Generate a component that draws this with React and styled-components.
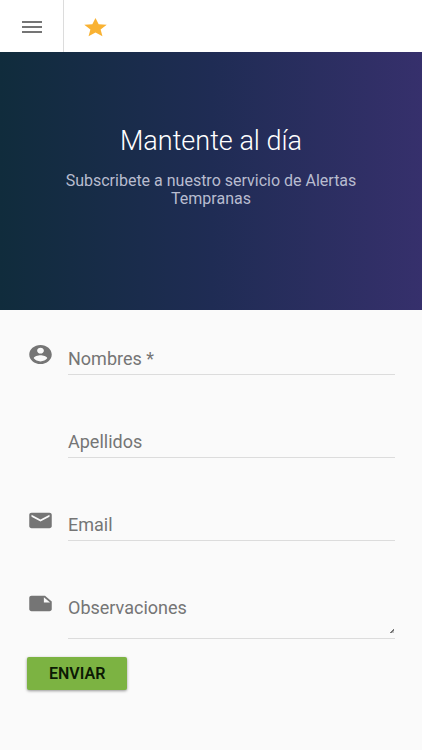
import React, { useState } from 'react';
import styled, { createGlobalStyle } from 'styled-components';

const ICONS = {
  star: 'M12 17.27L18.18 21l-1.64-7.03L22 9.24l-7.19-.61L12 2 9.19 8.63 2 9.24l5.46 4.73L5.82 21z',
  account:
    'M12 2C6.48 2 2 6.48 2 12s4.48 10 10 10 10-4.48 10-10S17.52 2 12 2zm0 3c1.66 0 3 1.34 3 3s-1.34 3-3 3-3-1.34-3-3 1.34-3 3-3zm0 14.2c-2.5 0-4.71-1.28-6-3.22.03-1.99 4-3.08 6-3.08 1.99 0 5.97 1.09 6 3.08-1.29 1.94-3.5 3.22-6 3.22z',
  email:
    'M20 4H4c-1.1 0-1.99.9-1.99 2L2 18c0 1.1.9 2 2 2h16c1.1 0 2-.9 2-2V6c0-1.1-.9-2-2-2zm0 4l-8 5-8-5V6l8 5 8-5v2z',
  note: 'M22 10l-6-6H4c-1.1 0-2 .9-2 2v12.01c0 1.1.9 1.99 2 1.99l16-.01c1.1 0 2-.89 2-1.99v-8zm-7-4.5l5.5 5.5H15V5.5z',
};

const fields = [
  { name: 'nombres', label: 'Nombres *', icon: 'account', required: true },
  { name: 'apellidos', label: 'Apellidos' },
  { name: 'email', label: 'Email', icon: 'email', type: 'email' },
  { name: 'observaciones', label: 'Observaciones', icon: 'note', multiline: true },
];

const Icon = ({ name }) => (
  <IconSvg viewBox="0 0 24 24" preserveAspectRatio="none" aria-hidden="true">
    <path d={ICONS[name]} />
  </IconSvg>
);

const Field = ({ field, value, onChange }) => (
  <FieldRow>
    <IconCell>{field.icon && <Icon name={field.icon} />}</IconCell>
    <Control>
      {!value && <Label htmlFor={field.name}>{field.label}</Label>}
      <Input
        as={field.multiline ? 'textarea' : 'input'}
        id={field.name}
        name={field.name}
        type={field.multiline ? undefined : field.type || 'text'}
        aria-label={field.label}
        required={field.required}
        value={value}
        onChange={onChange}
        $multiline={field.multiline}
      />
    </Control>
  </FieldRow>
);

const App = () => {
  const [values, setValues] = useState({});

  const handleChange = (e) => {
    setValues({ ...values, [e.target.name]: e.target.value });
  };

  const handleSubmit = (e) => {
    e.preventDefault();
    setValues({});
  };

  return (
    <>
      <GlobalStyle />
      <Toolbar>
        <ToolbarButton type="button" aria-label="Menú" $width={64} $divider>
          <MenuSvg viewBox="0 0 20 12" aria-hidden="true">
            <path d="M0 1h20M0 6h20M0 11h20" />
          </MenuSvg>
        </ToolbarButton>
        <ToolbarButton type="button" aria-label="Favoritos" $width={63} $color="#f9b233">
          <Icon name="star" />
        </ToolbarButton>
      </Toolbar>

      <Hero>
        <Title>Mantente al día</Title>
        <Subtitle>Subscribete a nuestro servicio de Alertas Tempranas</Subtitle>
      </Hero>

      <Form onSubmit={handleSubmit}>
        <Fields>
          {fields.map((field) => (
            <Field
              key={field.name}
              field={field}
              value={values[field.name] || ''}
              onChange={handleChange}
            />
          ))}
        </Fields>
        <SubmitButton type="submit">ENVIAR</SubmitButton>
      </Form>
    </>
  );
};

// styled components
const GlobalStyle = createGlobalStyle`
  *, *::before, *::after {
    box-sizing: border-box;
  }

  body {
    margin: 0;
    background: #fafafa;
    color: #757575;
    font-family: Roboto, "Liberation Sans", sans-serif;
  }
`;

const Toolbar = styled.header`
  display: flex;
  height: 52px;
  background: #fff;
`;

const ToolbarButton = styled.button`
  display: flex;
  align-items: center;
  justify-content: center;
  width: ${({ $width }) => $width}px;
  padding: 2px 0 0;
  border: 0;
  border-right: ${({ $divider }) => ($divider ? '1px solid #dcdcdc' : '0')};
  background: none;
  color: ${({ $color }) => $color || '#757575'};
  cursor: pointer;
`;

const MenuSvg = styled.svg`
  width: 20px;
  height: 12px;
  fill: none;
  stroke: currentColor;
  stroke-width: 2;
`;

const IconSvg = styled.svg`
  display: block;
  width: 27px;
  height: 23px;
  fill: currentColor;
`;

const Hero = styled.section`
  display: flex;
  flex-direction: column;
  align-items: center;
  padding: 73px 48px 102px;
  background: linear-gradient(to right, #102c3c, #1f2c54 50%, #36306c);
  text-align: center;
`;

const Title = styled.h1`
  margin: 0 0 15px;
  color: #fff;
  font-size: 27px;
  font-weight: 300;
  line-height: 32px;
`;

const Subtitle = styled.p`
  margin: 0;
  color: #b8bccf;
  font-size: 16px;
  font-weight: 400;
  line-height: 18px;
`;

const Form = styled.form`
  padding: 33px 27px;
`;

const Fields = styled.div`
  display: grid;
  gap: 51px;
  margin-bottom: 18px;
`;

const FieldRow = styled.div`
  display: grid;
  grid-template-columns: 41px 1fr;
`;

const IconCell = styled.span`
  display: block;
`;

const Control = styled.div`
  display: grid;
`;

const Label = styled.label`
  grid-area: 1 / 1;
  z-index: 1;
  align-self: start;
  padding-top: 6px;
  font-size: 18px;
  line-height: 20px;
  pointer-events: none;
`;

const Input = styled.input`
  grid-area: 1 / 1;
  display: block;
  width: 100%;
  height: ${({ $multiline }) => ($multiline ? 47 : 32)}px;
  padding: 6px 0 5px;
  border: 0;
  border-bottom: 1px solid #dcdcdc;
  border-radius: 0;
  outline: none;
  background: transparent;
  color: #212121;
  font-family: inherit;
  font-size: 18px;
  line-height: 20px;
  resize: vertical;

  &:focus {
    border-color: #7cb342;
  }

  &::-webkit-resizer {
    background: linear-gradient(135deg, transparent 45%, #757575 45%, #757575 65%, #c4c4c4 65%)
      right 1px bottom 5px / 4px 4px no-repeat;
  }
`;

const SubmitButton = styled.button`
  display: block;
  height: 33px;
  padding: 0 22px;
  border: 0;
  border-radius: 2px;
  background: #7cb342;
  box-shadow: 0 1px 3px rgba(0, 0, 0, 0.4);
  color: #0c1a04;
  font-family: inherit;
  font-size: 16px;
  font-weight: 600;
  cursor: pointer;
`;

export default App;
